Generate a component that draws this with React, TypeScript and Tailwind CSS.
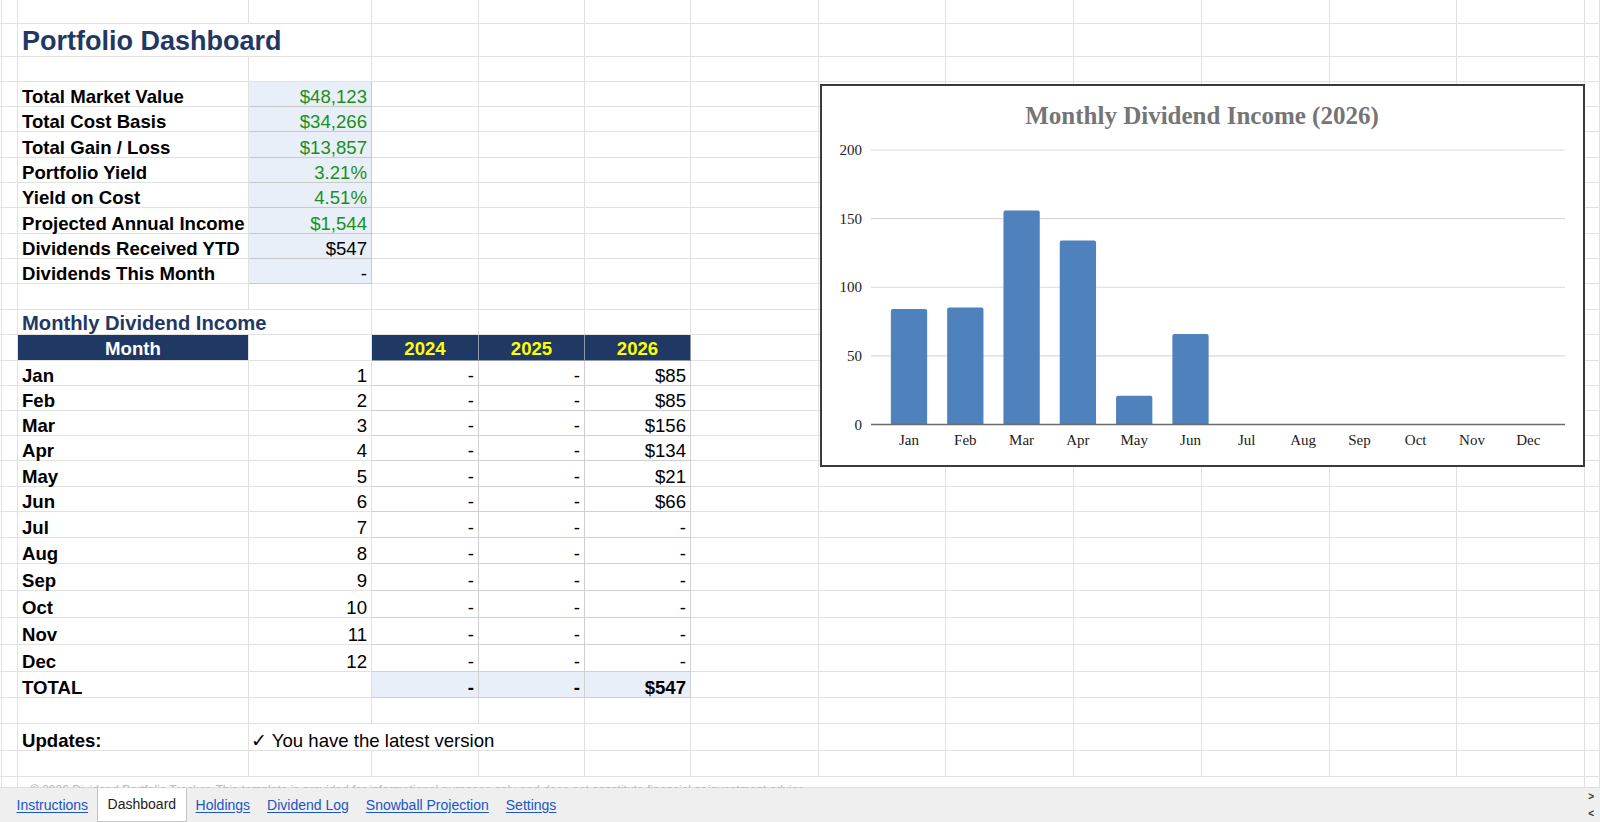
import React from "react";
import { twMerge } from "tailwind-merge";

// column widths and row heights of the sheet grid (px)
const COLS = [2, 16, 231, 123, 107, 106, 106, 128, 127, 128, 128, 128, 127, 128, 15];
const ROWS = [24, 33, 25, 25, 25, 26, 25, 25, 26, 25, 25, 26, 25, 26, 25, 25, 25, 25, 26, 25, 26, 26, 27, 27, 27, 27, 26, 26, 27, 26, 11];

interface Cell {
  c: number;
  span?: number;
  text?: React.ReactNode;
  cls?: string;
}

const GREEN = "text-[#1b8f1b]";
const VALUE = "justify-end bg-[#e9eff8] border-[#c9c9c9]";
const TABLE = "justify-end border-[#d0d0d0]";
const HEAD = "justify-center bg-[#1f3864] text-[#ffff00] font-bold border-[#8f99ad] pb-[2px]";

const summary: [string, string, boolean][] = [
  ["Total Market Value", "$48,123", true],
  ["Total Cost Basis", "$34,266", true],
  ["Total Gain / Loss", "$13,857", true],
  ["Portfolio Yield", "3.21%", true],
  ["Yield on Cost", "4.51%", true],
  ["Projected Annual Income", "$1,544", true],
  ["Dividends Received YTD", "$547", false],
  ["Dividends This Month", "-", false],
];

const months = ["Jan", "Feb", "Mar", "Apr", "May", "Jun", "Jul", "Aug", "Sep", "Oct", "Nov", "Dec"];
const income2026 = ["$85", "$85", "$156", "$134", "$21", "$66", "-", "-", "-", "-", "-", "-"];
const chartValues = [84.2, 85.2, 156, 134, 21, 66, 0, 0, 0, 0, 0, 0];

const sheet: Record<number, Cell[]> = {};

sheet[1] = [
  { c: 2, span: 2, text: "Portfolio Dashboard", cls: "text-[27px] font-bold text-[#1f3864] leading-[30px]" },
];

summary.forEach(([label, value, green], i) => {
  sheet[3 + i] = [
    { c: 2, text: label, cls: "font-bold leading-[18px]" },
    { c: 3, text: value, cls: twMerge(VALUE, "leading-[18px]", green ? GREEN : "") },
  ];
});

sheet[12] = [
  { c: 2, span: 2, text: "Monthly Dividend Income", cls: "text-[20.2px] font-bold text-[#1f3864] leading-[22px]" },
];

sheet[13] = [
  { c: 2, text: "Month", cls: "justify-center bg-[#1f3864] text-white font-bold pb-[2px]" },
  { c: 4, text: "2024", cls: HEAD },
  { c: 5, text: "2025", cls: HEAD },
  { c: 6, text: "2026", cls: HEAD },
];

months.forEach((m, i) => {
  sheet[14 + i] = [
    { c: 2, text: m, cls: "font-bold" },
    { c: 3, text: String(i + 1), cls: "justify-end" },
    { c: 4, text: "-", cls: TABLE },
    { c: 5, text: "-", cls: TABLE },
    { c: 6, text: income2026[i], cls: TABLE },
  ];
});

sheet[26] = [
  { c: 2, text: "TOTAL", cls: "font-bold" },
  { c: 4, text: "-", cls: twMerge(TABLE, "bg-[#e9eff8] font-bold") },
  { c: 5, text: "-", cls: twMerge(TABLE, "bg-[#e9eff8] font-bold") },
  { c: 6, text: "$547", cls: twMerge(TABLE, "bg-[#e9eff8] font-bold") },
];

sheet[28] = [
  { c: 2, text: "Updates:", cls: "font-bold" },
  { c: 3, span: 3, text: "✓ You have the latest version", cls: "pl-[2px]" },
];

sheet[30] = [
  {
    c: 2,
    span: 12,
    text: "© 2026 Dividend Portfolio Tracker. This template is provided for informational purposes only and does not constitute financial or investment advice.",
    cls: "items-start pt-[7px] pl-[12px] text-[12px] leading-[12px] text-[#b8b8b8]",
  },
];

const BASE =
  "shrink-0 flex items-end px-0 border-r border-b border-[#e2e2e2] whitespace-nowrap text-[18.6px] leading-[19px] text-black";

const SheetRow = ({ r }: { r: number }) => {
  const defs = sheet[r] ?? [];
  const cells: React.ReactNode[] = [];
  let c = 0;
  while (c < COLS.length) {
    const d = defs.find((x) => x.c === c);
    const span = d?.span ?? 1;
    const w = COLS.slice(c, c + span).reduce((a, b) => a + b, 0);
    cells.push(
      <div key={c} style={{ width: w }} className={twMerge(BASE, d ? "px-[4px]" : "", d?.cls)}>
        {d?.text}
      </div>
    );
    c += span;
  }
  return (
    <div className="flex overflow-hidden" style={{ height: ROWS[r] }}>
      {cells}
    </div>
  );
};

const Chart = () => {
  const zero = 424.5;
  const step = 68.625;
  const perUnit = step / 50;
  const barW = 36.3;
  const center = (i: number) => 909 + 56.3 * i;

  return (
    <div className="absolute left-[820px] top-[84px] w-[765px] h-[383px] border-2 border-[#3a3a3a] bg-white">
      <svg width="761" height="379" viewBox="822 86 761 379" fontFamily="'Liberation Serif', 'Times New Roman', serif">
        <text x="1202" y="124" textAnchor="middle" fontSize="25" fontWeight="bold" fill="#757575">
          Monthly Dividend Income (2026)
        </text>

        {[0, 50, 100, 150, 200].map((v, i) => {
          const y = zero - i * step;
          return (
            <g key={v}>
              {v !== 0 && <line x1="871" x2="1565" y1={y} y2={y} stroke="#d9d9d9" strokeWidth="1.2" />}
              <text x="862" y={y + 5} textAnchor="end" fontSize="15" fill="#222">
                {v}
              </text>
            </g>
          );
        })}

        {chartValues.map((v, i) => {
          if (!v) return null;
          const h = v * perUnit;
          const x = center(i) - barW / 2;
          const y = zero - h;
          const r = 2;
          return (
            <path
              key={i}
              d={`M${x} ${zero} V${y + r} Q${x} ${y} ${x + r} ${y} H${x + barW - r} Q${x + barW} ${y} ${x + barW} ${y + r} V${zero} Z`}
              fill="#4f81bd"
            />
          );
        })}

        <line x1="871" x2="1565" y1={zero} y2={zero} stroke="#6b6b6b" strokeWidth="1.6" />

        {months.map((m, i) => (
          <text key={m} x={center(i)} y="445" textAnchor="middle" fontSize="15" fill="#222">
            {m}
          </text>
        ))}
      </svg>
    </div>
  );
};

const tabs = ["Instructions", "Dashboard", "Holdings", "Dividend Log", "Snowball Projection", "Settings"];

export default function App() {
  return (
    <div className="w-[1600px] h-[822px] overflow-hidden flex flex-col bg-white font-['Liberation_Sans',Arial,sans-serif]">
      {/* sheet */}
      <div className="relative flex-1 overflow-hidden">
        {ROWS.map((_, r) => (
          <SheetRow key={r} r={r} />
        ))}
        <Chart />
      </div>

      {/* sheet tabs */}
      <div className="h-[34px] shrink-0 flex items-stretch bg-[#efefef] pl-[8px] text-[14px]">
        {tabs.map((t) =>
          t === "Dashboard" ? (
            <div key={t} className="flex items-center px-[10px] bg-white border-x border-b border-[#c4c4c4] text-[#222]">
              {t}
            </div>
          ) : (
            <a key={t} className="flex items-center px-[8.5px] text-[#1a55c4] underline underline-offset-2 cursor-pointer">
              {t}
            </a>
          )
        )}
        <div className="ml-auto flex flex-col justify-center pr-[6px] text-[10px] font-bold leading-[17px] text-[#333]">
          <span>&gt;</span>
          <span>&lt;</span>
        </div>
      </div>
    </div>
  );
}
